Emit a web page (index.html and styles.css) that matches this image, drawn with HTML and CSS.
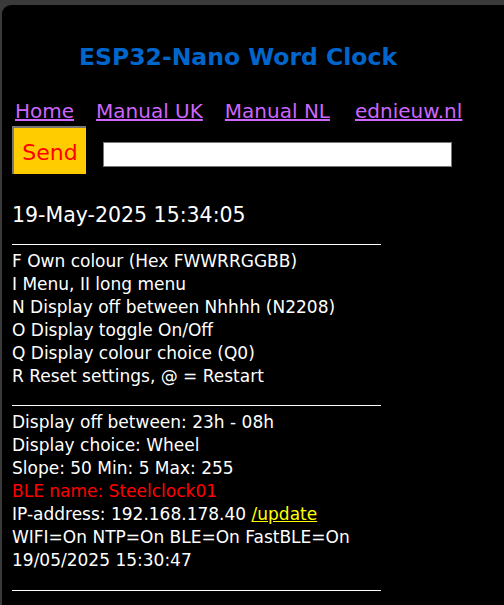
FILE: index.html
```html
<!DOCTYPE html>
<html>
<head>
<meta charset="utf-8">
<link rel="stylesheet" href="styles.css">
</head>
<body>
<div class="panel">
  <h1 class="title">ESP32-Nano Word Clock</h1>
  <nav class="links">
    <a href="#">Home</a>
    <a href="#">Manual UK</a>
    <a href="#">Manual NL</a>
    <a href="#" class="last">ednieuw.nl</a>
  </nav>
  <form class="cmd">
    <button type="button" class="send">Send</button>
    <input type="text" class="field">
  </form>
  <div class="date">19-May-2025 15:34:05</div>
  <div class="rule"></div>
  <div class="lines">
    <div>F Own colour (Hex FWWRRGGBB)</div>
    <div>I Menu, II long menu</div>
    <div>N Display off between Nhhhh (N2208)</div>
    <div>O Display toggle On/Off</div>
    <div>Q Display colour choice (Q0)</div>
    <div>R Reset settings, @ = Restart</div>
  </div>
  <div class="rule second"></div>
  <div class="lines">
    <div>Display off between: 23h - 08h</div>
    <div>Display choice: Wheel</div>
    <div>Slope: 50 Min: 5 Max: 255</div>
    <div class="red">BLE name: Steelclock01</div>
    <div>IP-address: 192.168.178.40 <a href="#" class="upd">/update</a></div>
    <div>WIFI=On NTP=On BLE=On FastBLE=On</div>
    <div>19/05/2025 15:30:47</div>
  </div>
  <div class="rule third"></div>
</div>
</body>
</html>
```
FILE: styles.css
```css
html, body {
  margin: 0;
  padding: 0;
  background: #3a3a3a;
  height: 100%;
  overflow: hidden;
}
body {
  padding: 5px 0 0 2px;
  box-sizing: border-box;
  font-family: "DejaVu Sans", Verdana, sans-serif;
  color: #ffffff;
}
.panel {
  background: #000000;
  border-top-left-radius: 9px;
  min-height: 100%;
  padding: 0 0 0 10px;
  box-sizing: border-box;
}
.title {
  margin: 0;
  padding: 39px 0 0 67px;
  font-size: 23.5px;
  line-height: 27px;
  font-weight: bold;
  color: #0066cc;
}
.links {
  display: flex;
  gap: 22px;
  margin-top: 29px;
  padding-left: 3px;
  font-size: 20px;
  line-height: 23px;
}
.links a {
  color: #cc66ff;
  text-decoration: underline;
}
.links a.last {
  margin-left: 3px;
}
.cmd {
  display: flex;
  align-items: flex-end;
  margin: 3px 0 0 0;
}
.send {
  width: 74px;
  height: 48px;
  background: #ffcc00;
  color: #ff0000;
  font-family: "DejaVu Sans", Verdana, sans-serif;
  font-size: 22px;
  border: 0;
  border-left: 2px solid #777;
  border-top: 2px solid #777;
  padding: 3px 0 0 0;
}
.field {
  margin: 0 0 7px 17px;
  width: 349px;
  height: 25px;
  box-sizing: border-box;
  border: 1px solid #777;
  background: #fff;
  padding: 0;
}
.date {
  margin-top: 29px;
  font-size: 20.5px;
  line-height: 24px;
}
.rule {
  width: 369px;
  height: 1px;
  background: #ffffff;
  margin-top: 17px;
  margin-bottom: 5px;
}
.rule.second {
  margin-top: 17px;
}
.rule.third {
  margin-top: 18px;
}
.lines {
  font-size: 17px;
  line-height: 23px;
}
.red {
  color: #ff0000;
}
.upd {
  color: #ffff00;
  text-decoration: underline;
}
```
